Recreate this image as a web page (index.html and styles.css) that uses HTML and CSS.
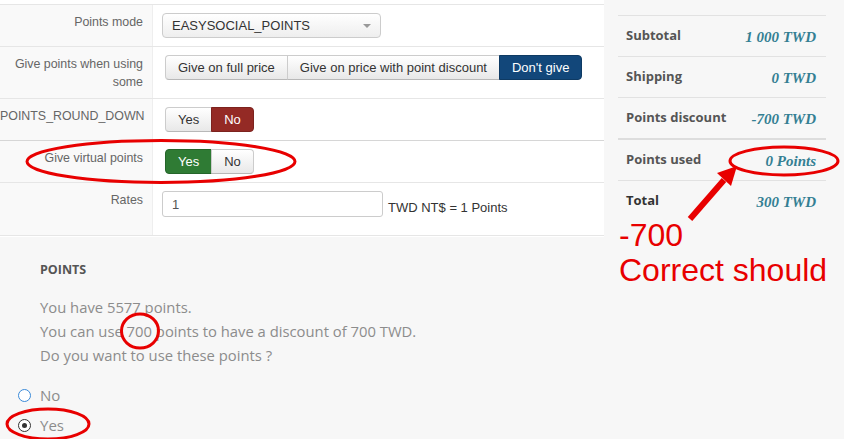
FILE: index.html
```html
<!DOCTYPE html>
<html>
<head>
    <link rel="stylesheet" href="styles.css">
</head>
<body>
    <div class="top">
        <div class="settings">
            <div class="row">
                <div class="label">Points mode</div>
                <div class="control"><div class="select">EASYSOCIAL_POINTS<span class="caret"></span></div></div>
            </div>
            <div class="row two-line">
                <div class="label">Give points when using some</div>
                <div class="control">
                    <div class="btn-group"><span class="btn">Give on full price</span><span class="btn">Give on price with point discount</span><span class="btn active-blue">Don't give</span></div>
                </div>
            </div>
            <div class="row">
                <div class="label">POINTS_ROUND_DOWN</div>
                <div class="control">
                    <div class="btn-group"><span class="btn">Yes</span><span class="btn active-red">No</span></div>
                </div>
            </div>
            <div class="row strong-line">
                <div class="label">Give virtual points</div>
                <div class="control">
                    <div class="btn-group"><span class="btn active-green">Yes</span><span class="btn">No</span></div>
                </div>
            </div>
            <div class="row last">
                <div class="label">Rates</div>
                <div class="control"><div class="input">1</div><span class="unit">TWD NT$ = 1 Points</span></div>
            </div>
        </div>
        <div class="summary">
            <div class="sum-row"><span class="sum-label">Subtotal</span><span class="sum-value">1 000 TWD</span></div>
            <div class="sum-row"><span class="sum-label">Shipping</span><span class="sum-value">0 TWD</span></div>
            <div class="sum-row"><span class="sum-label">Points discount</span><span class="sum-value">-700 TWD</span></div>
            <div class="sum-row strong-line"><span class="sum-label">Points used</span><span class="sum-value">0 Points</span></div>
            <div class="sum-row total"><span class="sum-label">Total</span><span class="sum-value">300 TWD</span></div>
        </div>
    </div>
    <div class="points">
        <h4>POINTS</h4>
        <p>You have 5577 points.<br>You can use 700 points to have a discount of 700 TWD.<br>Do you want to use these points ?</p>
        <div class="radio"><span class="dot"></span>No</div>
        <div class="radio"><span class="dot checked"></span>Yes</div>
    </div>
    <svg class="notes" width="844" height="439" viewBox="0 0 844 439">
        <ellipse cx="161" cy="161.5" rx="134" ry="21"/>
        <ellipse cx="784" cy="161" rx="54" ry="14"/>
        <ellipse cx="140" cy="331" rx="18.5" ry="17"/>
        <ellipse cx="48" cy="424" rx="41" ry="15"/>
        <line x1="690" y1="219" x2="724" y2="180"/>
        <polygon points="737,166 717,173 731,186"/>
        <text x="619" y="246">-700</text>
        <text x="619" y="281">Correct should</text>
    </svg>
</body>
</html>
```
FILE: styles.css
```css
body { margin: 0; width: 844px; height: 439px; overflow: hidden; position: relative; background-color: #f7f7f7; font-family: 'Liberation Sans', Arial, sans-serif; }

.top { display: flex; }
.settings { width: 604px; background-color: #ffffff; padding-top: 4px; height: 233px; }
.row { display: grid; grid-template-columns: 153px 1fr; border-top: 1px solid #e6e6e6; }
.row.strong-line { border-top-color: #d6d6d6; }
.row.last { border-bottom: 1px solid #e6e6e6; }
.label { background-color: #f9f9f9; border-right: 1px solid #eeeeee; color: #666666; font-size: 12.4px; line-height: 18px; text-align: right; padding: 8px 9px 8px 0; }
.row.two-line .label { padding-bottom: 7px; }
.control { display: flex; align-items: flex-start; padding: 8px 9px; }
.row.last .control { padding-bottom: 18px; }

.select { position: relative; width: 208px; height: 23px; padding-left: 9px; border: 1px solid #cccccc; border-radius: 4px; background: linear-gradient(#ffffff, #eeeeee); color: #333333; font-size: 13px; line-height: 23px; }
.caret { position: absolute; right: 9px; top: 10px; border-left: 4px solid transparent; border-right: 4px solid transparent; border-top: 4px solid #999999; }

.btn-group { display: flex; margin-left: 3px; }
.btn { height: 23px; padding: 0 12px; border: 1px solid #cccccc; border-bottom-color: #b8b8b8; margin-left: -1px; background: linear-gradient(#ffffff, #e8e8e8); color: #333333; font-size: 13px; line-height: 23px; }
.btn:first-child { border-radius: 4px 0 0 4px; margin-left: 0; }
.btn:last-child { border-radius: 0 4px 4px 0; }
.btn.active-blue { background: #12477a; border-color: #0e3a63; color: #ffffff; }
.btn.active-red { background: #942a25; border-color: #7c221e; color: #ffffff; }
.btn.active-green { background: #2f7b34; border-color: #25652a; color: #ffffff; }

.input { width: 210px; height: 24px; padding-left: 9px; border: 1px solid #cccccc; border-radius: 3px; color: #555555; font-size: 13px; line-height: 26px; }
.unit { margin-left: 5px; margin-top: 9px; color: #333333; font-size: 13px; }

.summary { flex: 1; padding: 15px 18px 0 14px; font-family: 'Open Sans', sans-serif; }
.sum-row { box-sizing: border-box; display: flex; justify-content: space-between; align-items: center; height: 41px; border-top: 1px solid #e2e2e2; padding: 0 10px 3px 8px; }
.sum-row.strong-line { border-top: 2px solid #dddddd; height: 42px; }
.sum-label { color: #555555; font-size: 13px; font-weight: bold; }
.sum-row.total .sum-label { color: #333333; }
.sum-value { color: #347f93; font-family: 'Liberation Serif', Georgia, serif; font-size: 15px; font-style: italic; font-weight: bold; margin-top: 6px; }

.points { padding: 24px 0 0 40px; font-family: 'Open Sans', sans-serif; }
.points h4 { margin: 0 0 16px; color: #555555; font-size: 12.5px; line-height: 18px; }
.points p { margin: 0 0 13px; color: #8c8c8c; font-size: 14.8px; line-height: 24px; }
.radio { position: relative; color: #8c8c8c; font-size: 15px; line-height: 30px; }
.dot { position: absolute; left: -22px; top: 9px; width: 11px; height: 11px; border: 1px solid #3a8ad8; border-radius: 50%; background-color: #ffffff; }
.dot.checked { border-color: #333333; }
.dot.checked::after { content: ''; position: absolute; left: 3px; top: 3px; width: 5px; height: 5px; border-radius: 50%; background-color: #333333; }

.notes { position: absolute; left: 0; top: 0; pointer-events: none; }
.notes ellipse { fill: none; stroke: #e80000; stroke-width: 3; }
.notes line { stroke: #e80000; stroke-width: 6; }
.notes polygon { fill: #e80000; }
.notes text { fill: #e80000; font-family: 'Liberation Sans', Arial, sans-serif; font-size: 32px; }
```
